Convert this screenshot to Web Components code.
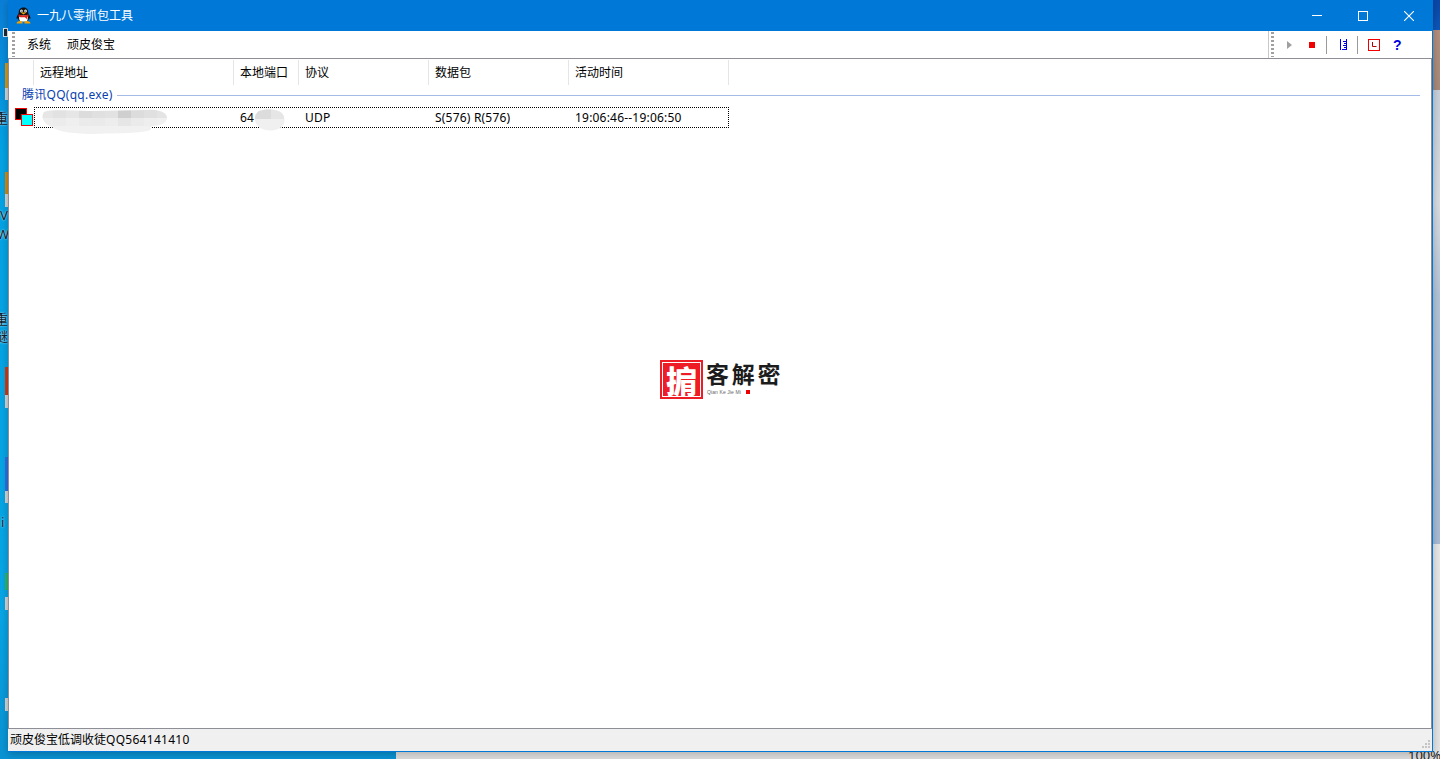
<!DOCTYPE html>
<html lang="zh">
<head>
<meta charset="utf-8">
<title>一九八零抓包工具</title>
<style>
  html, body { margin: 0; height: 759px; overflow: hidden; }
  body { font: 12px/16px "Noto Sans", "Noto Sans CJK SC", sans-serif; color: #000; }
</style>
</head>
<body>
<desk-top>
  <desk-scrap style="left:3px;top:28px;width:5px;height:9px;background:#1c2a36;border:1px solid #dfe7ee;box-sizing:border-box"></desk-scrap>
  <desk-scrap style="left:5px;top:63px;width:3px;height:25px;background:#d29a1e"></desk-scrap>
  <desk-scrap style="left:5px;top:88px;width:3px;height:12px;background:#d5d5d5"></desk-scrap>
  <desk-scrap style="left:5px;top:172px;width:3px;height:22px;background:#d48a12"></desk-scrap>
  <desk-scrap style="left:5px;top:194px;width:3px;height:13px;background:#d5d5d5"></desk-scrap>
  <desk-scrap style="left:5px;top:367px;width:3px;height:28px;background:#cf3a14"></desk-scrap>
  <desk-scrap style="left:5px;top:395px;width:3px;height:13px;background:#d5d5d5"></desk-scrap>
  <desk-scrap style="left:5px;top:457px;width:3px;height:34px;background:#2f6fdc"></desk-scrap>
  <desk-scrap style="left:5px;top:491px;width:3px;height:12px;background:#d5d5d5"></desk-scrap>
  <desk-scrap style="left:5px;top:573px;width:3px;height:17px;background:#2fb56a"></desk-scrap>
  <desk-scrap style="left:5px;top:597px;width:3px;height:13px;background:#d5d5d5"></desk-scrap>
  <desk-scrap style="left:5px;top:698px;width:3px;height:13px;background:#d5d5d5"></desk-scrap>
  <desk-scrap text style="left:-5px;top:110px">重</desk-scrap>
  <desk-scrap text style="left:0;top:207px">V</desk-scrap>
  <desk-scrap text style="left:-3px;top:226px">W</desk-scrap>
  <desk-scrap text style="left:-5px;top:311px">重</desk-scrap>
  <desk-scrap text style="left:-5px;top:328px">谜</desk-scrap>
  <desk-scrap text style="left:1px;top:514px">i</desk-scrap>
  <desk-scrap style="left:1408px;top:747px;font-size:13px;color:#222">100%</desk-scrap>

  <app-window>
    <title-bar slot="title" caption="一九八零抓包工具"></title-bar>
    <tool-bar slot="tools">
      <span slot="menu">系统</span>
      <span slot="menu">顽皮俊宝</span>
    </tool-bar>
    <list-view slot="list">
      <group-row label="腾讯QQ(qq.exe)"></group-row>
      <packet-row port="64" proto="UDP" packets="S(576) R(576)" time="19:06:46--19:06:50"></packet-row>
      <seal-logo></seal-logo>
    </list-view>
    <status-bar slot="status">顽皮俊宝低调收徒<span style="letter-spacing:.28px">QQ564141410</span></status-bar>
  </app-window>
</desk-top>

<script>
class DeskTop extends HTMLElement {
  constructor() {
    super();
    this.attachShadow({ mode: "open" }).innerHTML = `
      <style>
        :host { display: block; position: relative; width: 1440px; height: 759px; overflow: hidden;
          background:
            linear-gradient(#e4e4e4, #dcdcdc) 396px 752px / 1044px 7px no-repeat,
            linear-gradient(#0a46a8, #0d58bc) 1433px 0 / 7px 30px no-repeat,
            linear-gradient(#b48f7c, #a98a7a) 1433px 30px / 7px 60px no-repeat,
            linear-gradient(#c9d0da 0, #d9dde2 25%, #b4c4d8 45%, #a9bcd3 100%) 1433px 90px / 7px 454px no-repeat,
            linear-gradient(#e8e8e8, #e4e4e4) 1433px 544px / 7px 215px no-repeat,
            linear-gradient(#0a7fd8, #04a3e4 20%, #08a6e6 80%, #0a93d4); }
      </style>
      <slot></slot>`;
  }
}

class DeskScrap extends HTMLElement {
  constructor() {
    super();
    this.attachShadow({ mode: "open" }).innerHTML = `
      <style>
        :host { position: absolute; display: block; white-space: nowrap; }
        :host([text]) { font-size: 13px; color: #10202c; text-shadow: 0 0 2px #fff; }
      </style>
      <slot></slot>`;
  }
}

class AppWindow extends HTMLElement {
  constructor() {
    super();
    this.attachShadow({ mode: "open" }).innerHTML = `
      <style>
        :host { position: absolute; left: 8px; top: 0; width: 1425px; height: 752px; box-sizing: border-box;
          display: flex; flex-direction: column; background: #f0f0f0;
          border-right: 1px solid #0078d7; border-bottom: 1px solid #0078d7;
          box-shadow: 0 2px 8px rgba(0,0,0,.25); }
        .list { flex: 1; min-height: 0; display: flex; background: #fff; border: 1px solid #8e8e96; }
      </style>
      <slot name="title"></slot>
      <slot name="tools"></slot>
      <div class="list"><slot name="list"></slot></div>
      <slot name="status"></slot>`;
  }
}

class TitleBar extends HTMLElement {
  constructor() {
    super();
    this.attachShadow({ mode: "open" });
  }

  connectedCallback() {
    this.shadowRoot.innerHTML = `
      <style>
        :host { display: flex; align-items: center; height: 31px; background: #0078d7; color: #fff; flex: none; }
        .icon { width: 15px; height: 17px; margin: 0 6px 0 8px; flex: none; display: block; }
        .cap { flex: 1; font-size: 12px; }
        .btn { width: 46px; height: 31px; display: flex; align-items: center; justify-content: center; }
        .btn svg { display: block; }
      </style>
      <svg class="icon" viewBox="1.5 0 13 17" preserveAspectRatio="none">
        <path d="M8 0.5C5 0.5 3.9 3 3.9 5.4C3.9 6.6 2.4 8.4 2 10.4C1.8 11.7 2.4 12 3.2 11.2C3.6 13 4.4 14 4.4 14L11.6 14C11.6 14 12.5 13 12.8 11.2C13.6 12 14.2 11.7 14 10.4C13.6 8.4 12.1 6.6 12.1 5.4C12.1 3 11 0.5 8 0.5Z" fill="#111"/>
        <path d="M4.4 8.6C3.8 11 4.3 13.4 5.4 14.6L10.6 14.6C11.7 13.4 12.2 11 11.6 8.6Z" fill="#fff"/>
        <ellipse cx="6.3" cy="3.9" rx="1.2" ry="1.5" fill="#fff"/>
        <ellipse cx="9.7" cy="3.9" rx="1.2" ry="1.5" fill="#fff"/>
        <circle cx="6.6" cy="4.1" r=".6" fill="#111"/>
        <circle cx="9.4" cy="4.1" r=".6" fill="#111"/>
        <path d="M5.6 5.6L10.4 5.6L8 7.4Z" fill="#f5a800"/>
        <path d="M3.8 7.2C6.4 8.8 9.6 8.8 12.2 7.2L12.4 9.4L11.2 9.8L11.4 12.4L9.2 10.2C7 10.6 5 10.2 3.6 9.4Z" fill="#e0201c"/>
        <path d="M2 16.6C2 14.6 4 13.6 7 14.4L7.2 16.6ZM14 16.6C14 14.6 12 13.6 9 14.4L8.8 16.6Z" fill="#f5a000"/>
      </svg>
      <span class="cap">${this.getAttribute("caption")}</span>
      <div class="btn"><svg width="10" height="1"><rect width="10" height="1" fill="#fff"/></svg></div>
      <div class="btn"><svg width="10" height="10"><rect x=".5" y=".5" width="9" height="9" fill="none" stroke="#fff"/></svg></div>
      <div class="btn"><svg width="10" height="10"><path d="M0 0L10 10M10 0L0 10" stroke="#fff" stroke-width="1.1"/></svg></div>`;
  }
}

class ToolBar extends HTMLElement {
  constructor() {
    super();
    this.attachShadow({ mode: "open" }).innerHTML = `
      <style>
        :host { display: flex; align-items: center; height: 27px; flex: none; background: #fff; }
        .grip { width: 3px; height: 25px; margin-left: 4px; flex: none;
          background: repeating-linear-gradient(#a0a0a0 0 2px, transparent 2px 4px); }
        .menu { flex: 1; display: flex; gap: 16px; padding-left: 12px; }
        ::slotted(span) { display: block; }
        .tools { display: flex; align-items: center; height: 27px; border-left: 1px solid #c8c8c8; width: 164px; box-sizing: border-box; }
        .tools .grip { margin-left: 2px; }
        .tools svg { display: block; flex: none; }
        .sep { width: 1px; height: 18px; background: #9a9a9a; flex: none; }
        .q { color: #0000e0; font: bold 14px/16px "Liberation Sans", sans-serif; flex: none; }
      </style>
      <div class="grip"></div>
      <div class="menu"><slot name="menu"></slot></div>
      <div class="tools">
        <div class="grip"></div>
        <svg width="5" height="8" style="margin-left:13px" viewBox="0 0 5 8"><path d="M0 0L5 4L0 8Z" fill="#a0a0a0"/></svg>
        <svg width="6" height="6" style="margin-left:17px"><rect width="6" height="6" fill="#f00000"/></svg>
        <div class="sep" style="margin-left:11px"></div>
        <svg width="7" height="11" style="margin-left:13px" viewBox="0 0 7 11"><path d="M.5 0V11M6.5 0V11M3 2.5H6M4 4.5H6M3 6.5H6M4 8.5H6M2 10.5H7" stroke="#0000e0" fill="none"/></svg>
        <div class="sep" style="margin-left:10px"></div>
        <svg width="12" height="12" style="margin-left:10px"><rect x=".5" y=".5" width="11" height="11" fill="none" stroke="#f00000"/><path d="M4.5 3V7.5H8.5" stroke="#b00000" fill="none"/></svg>
        <span class="q" style="margin-left:13px">?</span>
      </div>`;
  }
}

class ListView extends HTMLElement {
  constructor() {
    super();
    const cols = ["远程地址", "本地端口", "协议", "数据包", "活动时间"];
    this.attachShadow({ mode: "open" }).innerHTML = `
      <style>
        :host { display: block; flex: 1; position: relative; min-width: 0; }
        .head { display: grid; grid-template-columns: 25px 200px 65px 130px 140px 160px; width: 720px; height: 26px; }
        .head div { border-right: 1px solid #e5e5e5; margin-top: 1px; padding-left: 6px; line-height: 25px; box-sizing: border-box; height: 25px; }
        .head div:first-child { padding: 0; }
      </style>
      <div class="head"><div></div>${cols.map(c => `<div>${c}</div>`).join("")}</div>
      <slot></slot>`;
  }
}

class GroupRow extends HTMLElement {
  constructor() {
    super();
    this.attachShadow({ mode: "open" });
  }

  connectedCallback() {
    this.shadowRoot.innerHTML = `
      <style>
        :host { display: flex; align-items: center; height: 20px; padding: 0 11px 0 13px; color: #0a3fb0; gap: 4px; }
        i { flex: 1; height: 1px; background: #a4bbe8; }
        span { white-space: nowrap; letter-spacing: .27px; }
      </style>
      <span>${this.getAttribute("label")}</span><i></i>`;
  }
}

class PacketRow extends HTMLElement {
  constructor() {
    super();
    this.attachShadow({ mode: "open" });
  }

  connectedCallback() {
    // the two smears hide the address and the port, as in the screenshot
    const top = ["#e6e6e6", "#e2e2e2", "#e6e6e6", "#dcdcdc", "#e0e0e0", "#e2e2e2", "#cfcfcf", "#dcdcdc", "#e0e0e0", "#e4e4e4"];
    const low = ["#eeeeee", "#ececec", "#efefef", "#ebebeb", "#eaeaea", "#ededed", "#e6e6e6", "#ebebeb", "#eeeeee", "#f0f0f0"];
    const blocks = (list, y, h) => list.map((c, i) => `<rect x="${i * 13}" y="${y}" width="13" height="${h}" fill="${c}"/>`).join("");
    this.shadowRoot.innerHTML = `
      <style>
        :host { display: flex; align-items: flex-start; margin: 2px 0 0 6px; position: relative; }
        .ico { width: 19px; height: 19px; flex: none; display: block; margin-top: 1px; }
        .row { display: grid; grid-template-columns: 200px 65px 130px 140px 160px; width: 695px; height: 21px; flex: none;
          box-sizing: border-box; border: 1px dotted #000; line-height: 19px; letter-spacing: .2px; }
        .row div { padding-left: 5px; white-space: nowrap; }
        .blur { position: absolute; display: block; }
      </style>
      <svg class="ico" viewBox="0 0 19 19">
        <rect x=".5" y=".5" width="11" height="11" fill="#000" stroke="#f00000"/>
        <rect x="6.5" y="6.5" width="11" height="11" fill="#00ffff" stroke="#f00000"/>
      </svg>
      <div class="row">
        <div></div>
        <div>${this.getAttribute("port")}</div>
        <div>${this.getAttribute("proto")}</div>
        <div>${this.getAttribute("packets")}</div>
        <div>${this.getAttribute("time")}</div>
      </div>
      <svg class="blur" style="left:25px;top:1px" width="127" height="26" viewBox="0 0 127 26">
        <clipPath id="addr"><path d="M4 4C12 1 30 3 50 3L108 2C120 1 127 5 127 10C127 15 120 18 112 18L110 22C100 26 70 25 55 26C35 26 18 24 12 19C4 16 0 10 4 4Z"/></clipPath>
        <g clip-path="url(#addr)">${blocks(top, 0, 10)}${blocks(low, 10, 8)}<rect y="18" width="127" height="8" fill="#f1f1f1"/></g>
      </svg>
      <svg class="blur" style="left:238px;top:2px" width="33" height="22" viewBox="0 0 33 22">
        <clipPath id="port"><path d="M6 2C14 -1 30 0 31 8C33 14 30 19 22 21C12 23 4 19 2 12C1 8 3 4 6 2Z"/></clipPath>
        <g clip-path="url(#port)">
          <rect width="33" height="22" fill="#f0f0f0"/>
          <rect x="2" width="16" height="10" fill="#dcdcdc"/>
          <rect x="18" width="13" height="10" fill="#e6e6e6"/>
        </g>
      </svg>`;
  }
}

class SealLogo extends HTMLElement {
  constructor() {
    super();
    this.attachShadow({ mode: "open" }).innerHTML = `
      <style>
        :host { position: absolute; left: 651px; top: 301px; display: flex; gap: 3px; color: #1c1c1c; }
        .seal { width: 43px; height: 39px; box-sizing: border-box; border: 2px solid #ee1c25; padding: 1px; background: #fff; }
        .seal div { height: 100%; background: #ee1c25; color: #fff; overflow: hidden; display: flex; align-items: center; justify-content: center;
          font: 900 31px/33px "Noto Sans CJK SC", sans-serif; }
        .txt { display: flex; flex-direction: column; }
        .big { font: 700 23px/27px "Noto Sans CJK SC", sans-serif; letter-spacing: 2.7px; white-space: nowrap; }
        .small { display: flex; align-items: center; gap: 5px; font: 5px/8px "Liberation Sans", sans-serif; letter-spacing: .1px; color: #666; margin: 1px 0 0 1px; }
        .small i { width: 4px; height: 4px; background: #e00; }
      </style>
      <div class="seal"><div>掮</div></div>
      <div class="txt">
        <div class="big">客解密</div>
        <div class="small">Qian Ke Jie Mi<i></i></div>
      </div>`;
  }
}

class StatusBar extends HTMLElement {
  constructor() {
    super();
    this.attachShadow({ mode: "open" }).innerHTML = `
      <style>
        :host { display: flex; align-items: center; height: 22px; flex: none; padding-left: 2px; position: relative; font-size: 12px; }
        svg { position: absolute; right: 1px; bottom: 2px; display: block; }
      </style>
      <div><slot></slot></div>
      <svg width="9" height="9" fill="#c4c4c4">
        <rect x="6" y="0" width="2" height="2"/><rect x="3" y="3" width="2" height="2"/><rect x="6" y="3" width="2" height="2"/>
        <rect x="0" y="6" width="2" height="2"/><rect x="3" y="6" width="2" height="2"/><rect x="6" y="6" width="2" height="2"/>
      </svg>`;
  }
}

customElements.define("desk-top", DeskTop);
customElements.define("desk-scrap", DeskScrap);
customElements.define("app-window", AppWindow);
customElements.define("title-bar", TitleBar);
customElements.define("tool-bar", ToolBar);
customElements.define("list-view", ListView);
customElements.define("group-row", GroupRow);
customElements.define("packet-row", PacketRow);
customElements.define("seal-logo", SealLogo);
customElements.define("status-bar", StatusBar);
</script>
</body>
</html>
